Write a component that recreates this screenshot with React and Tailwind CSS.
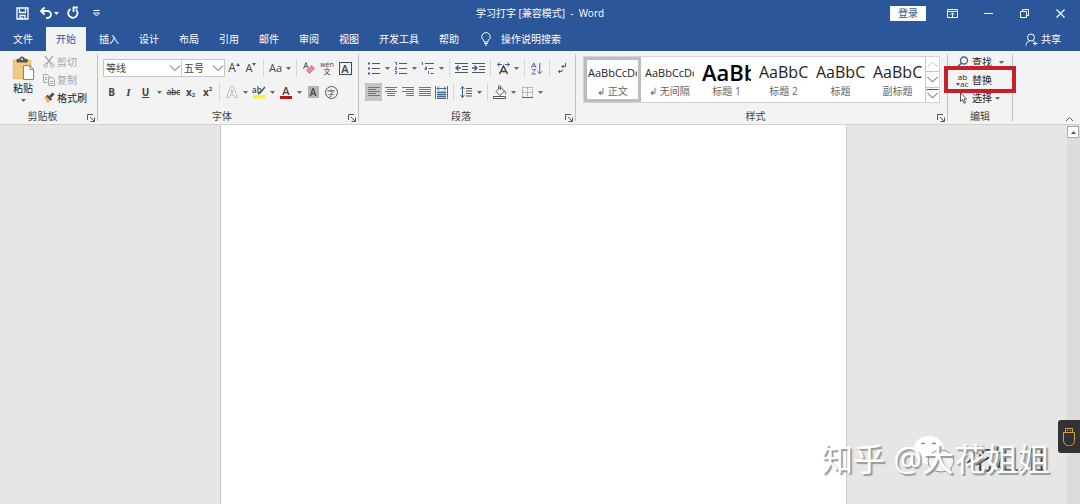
import { useState } from 'react';

const tabs = ['文件', '开始', '插入', '设计', '布局', '引用', '邮件', '审阅', '视图', '开发工具', '帮助'];

const styles = [
  { name: '↲ 正文', sample: 'AaBbCcDd', size: 'text-[11px]' },
  { name: '↲ 无间隔', sample: 'AaBbCcDd', size: 'text-[11px]' },
  { name: '标题 1', sample: 'AaBbC', size: 'text-[22px] font-semibold text-black' },
  { name: '标题 2', sample: 'AaBbCc', size: 'text-[16px]' },
  { name: '标题', sample: 'AaBbCc', size: 'text-[16px]' },
  { name: '副标题', sample: 'AaBbCc', size: 'text-[16px]' },
];

function Icon({ size = 'w-4 h-4', box = 16, color = 'text-[#555]', children }) {
  return (
    <svg
      className={`${size} ${color} shrink-0 overflow-visible`}
      viewBox={`0 0 ${box} ${box}`}
      fill="none"
      stroke="currentColor"
      strokeWidth="1"
      aria-hidden="true"
    >
      {children}
    </svg>
  );
}

function Tool({ label, width = 'w-[18px]', className = '', children }) {
  return (
    <button
      type="button"
      aria-label={label}
      className={`${width} h-[18px] shrink-0 flex items-center justify-center hover:bg-[#d5d5d5] ${className}`}
    >
      {children}
    </button>
  );
}

function Triangle() {
  return (
    <svg className="w-[5px] h-[3px] shrink-0" viewBox="0 0 5 3" fill="#666" aria-hidden="true">
      <path d="M0 0h5L2.500 3z" />
    </svg>
  );
}

function Caret({ label, width = 'w-[9px]' }) {
  return (
    <Tool label={label} width={width}>
      <Triangle />
    </Tool>
  );
}

function Sep() {
  return (
    <span className="w-[7px] h-[18px] shrink-0 flex justify-center">
      <span className="w-px h-full bg-[#d8d8d8]" />
    </span>
  );
}

function Lines({ rows }) {
  return (
    <Icon color="text-[#777]">
      {rows.map(([x1, x2], i) => (
        <path key={i} d={`M${x1} ${3.5 + i * 2}H${x2}`} />
      ))}
    </Icon>
  );
}

function GroupFooter({ title, launcher = true }) {
  return (
    <div className="mt-auto h-4 flex items-center">
      <span className="flex-1 text-center">{title}</span>
      {launcher && (
        <button type="button" aria-label={`${title}设置`} className="w-3 h-3 flex items-end justify-center">
          <Icon size="w-2 h-2" box={8}>
            <path d="M.5 6V.5H6M3 3l4 4M7.500 3.500v4h-4" />
          </Icon>
        </button>
      )}
    </div>
  );
}

function Group({ className = '', children }) {
  return (
    <section className={`flex shrink-0 ${className}`}>
      <div className="flex flex-1 flex-col min-w-0">{children}</div>
      <span className="w-px my-[3px] bg-[#c2c2c2]" />
    </section>
  );
}

function TitleBar() {
  return (
    <div className="h-[26px] grid grid-cols-[1fr_auto_1fr] items-center text-white">
      <div className="flex items-center pl-4">
        <button type="button" aria-label="保存" className="w-[13px]">
          <Icon size="w-[13px] h-[13px]" box={13} color="text-white">
            <path d="M1 1h11v11H1zM3.500 1v4.500h6V1M4 12V8.500h5V12M6 12v-2" strokeWidth="1.300" />
          </Icon>
        </button>
        <button type="button" aria-label="撤消" className="ml-[10px] flex items-center gap-px">
          <Icon size="w-[14px] h-[14px]" box={14} color="text-white">
            <path d="M5.500 1.500 2 5l3.500 3.500M2.500 5h6a3.500 3.500 0 0 1 0 7H7" strokeWidth="1.800" />
          </Icon>
          <svg className="w-[5px] h-[3px]" viewBox="0 0 5 3" fill="#fff"><path d="M0 0h5L2.500 3z" /></svg>
        </button>
        <button type="button" aria-label="重复" className="ml-[7px]">
          <Icon size="w-[14px] h-[14px]" box={14} color="text-white">
            <path d="M4.500 3A4.700 4.700 0 1 0 10 3.600M7.500 6V1.500H12" strokeWidth="1.800" />
          </Icon>
        </button>
        <button type="button" aria-label="自定义快速访问工具栏" className="ml-3">
          <Icon size="w-[9px] h-[9px]" box={9} color="text-white">
            <path d="M1.500 1.500h6M1.500 4h6l-3 3z" />
          </Icon>
        </button>
      </div>
      <h1 className="text-[10px] whitespace-pre">{'学习打字 [兼容模式]  -  Word'}</h1>
      <div className="flex items-center justify-end pr-[2px]">
        <button type="button" className="w-9 h-[15px] mr-2 bg-white text-[#2b579a] text-[10px] leading-[15px]">
          登录
        </button>
        <button type="button" aria-label="功能区显示选项" className="w-9 flex justify-center">
          <Icon size="w-[11px] h-[11px]" box={11} color="text-white">
            <path d="M.5 1.500h10v8H.5zM.5 3.500h10M5.500 9V5M3.500 6.800l2-2 2 2" />
          </Icon>
        </button>
        <button type="button" aria-label="最小化" className="w-9 flex justify-center">
          <Icon size="w-[9px] h-[9px]" box={9} color="text-white">
            <path d="M0 4.500h9" />
          </Icon>
        </button>
        <button type="button" aria-label="还原" className="w-9 flex justify-center">
          <Icon size="w-[9px] h-[9px]" box={9} color="text-white">
            <path d="M.5 2.500h6v6h-6zM2.500 2.500v-2h6v6h-2" />
          </Icon>
        </button>
        <button type="button" aria-label="关闭" className="w-9 flex justify-center">
          <Icon size="w-[9px] h-[9px]" box={9} color="text-white">
            <path d="M.5.5l8 8M8.500.5l-8 8" strokeWidth="1.200" />
          </Icon>
        </button>
      </div>
    </div>
  );
}

function TabBar({ active, onSelect }) {
  return (
    <nav className="h-[25px] flex items-end pl-[3px] text-white text-[10px]">
      {tabs.map((tab, i) => (
        <button
          key={tab}
          type="button"
          onClick={() => onSelect(tab)}
          className={`h-6 px-[10px] whitespace-nowrap ${i < 2 ? 'mr-[3px]' : ''} ${
            active === tab ? 'bg-[#f3f3f3] text-[#2b579a]' : ''
          }`}
        >
          {tab}
        </button>
      ))}
      <button type="button" className="h-6 ml-3 flex items-center gap-[10px] whitespace-nowrap">
        <svg className="w-[10px] h-[14px]" viewBox="0 0 10 14" fill="none" stroke="#fff" aria-hidden="true">
          <path d="M3 10V8.500C1.500 7.500.8 6.300.8 4.800a4.200 4.200 0 0 1 8.400 0C9.200 6.300 8.500 7.500 7 8.500V10zM3.200 11.500h3.600M4 13h2" />
        </svg>
        操作说明搜索
      </button>
      <button type="button" className="h-6 ml-auto mr-[19px] flex items-center gap-[3px]">
        <Icon size="w-[13px] h-[13px]" box={13} color="text-white">
          <circle cx="6" cy="4.500" r="3.500" />
          <path d="M1 12.500c.3-3 1.800-4.500 4-4.700M8 8l1 1M10 8.500v4M8 10.500h4.500" />
        </Icon>
        共享
      </button>
    </nav>
  );
}

function ClipboardGroup() {
  return (
    <Group className="w-[98px]">
      <div className="flex pt-[2px] pl-[11px]">
        <button type="button" className="w-6 pt-[2px] flex flex-col items-center text-[#222] whitespace-nowrap">
          <Icon size="w-6 h-[26px]" box={26}>
            <path d="M2.500 4.500h19v20h-19z" fill="#f0c983" stroke="#e8b85c" />
            <path d="M6.500 6.500v-3h3a2.500 2.500 0 0 1 5 0h3v3z" fill="#555" stroke="#555" />
            <circle cx="12" cy="3.500" r="1" fill="#fff" stroke="none" />
            <path d="M13.500 10.500h7l4 4v11h-11z" fill="#fff" stroke="#777" />
            <path d="M20.500 10.500v4h4" stroke="#777" />
          </Icon>
          <span className="leading-[14px]">粘贴</span>
          <span className="pt-1"><Triangle /></span>
        </button>
        <div className="ml-2 flex flex-col">
          <button type="button" className="h-[18px] flex items-center gap-[2px] text-[#a6a6a6]">
            <Icon size="w-3 h-3" box={12} color="text-[#a6a6a6]">
              <path d="M2 0l6.500 8M10 0L3.500 8" strokeWidth="1.300" />
              <circle cx="2.500" cy="9.500" r="1.700" />
              <circle cx="9.500" cy="9.500" r="1.700" />
            </Icon>
            剪切
          </button>
          <button type="button" className="h-[18px] flex items-center gap-[2px] text-[#a6a6a6]">
            <Icon size="w-3 h-3" box={12} color="text-[#a6a6a6]">
              <path d="M4.500 8.500h-4v-8h4l2 2M2 3.500h2M2 5.500h2M5.500 3.500h4l2 2v6h-6zM7 7.500h3M7 9.500h3" />
            </Icon>
            复制
          </button>
          <button type="button" className="h-[18px] flex items-center gap-[2px] text-[#222]">
            <Icon size="w-3 h-3" box={12}>
              <path d="M1 5l3-2 4 4-2 3-1 1.500z" fill="#e9b35f" stroke="none" />
              <path d="M4 3.500L8.500 8" stroke="#444" strokeWidth="2" />
              <path d="M7 5l3.500-3.500" stroke="#444" strokeWidth="2.500" />
            </Icon>
            格式刷
          </button>
        </div>
      </div>
      <GroupFooter title="剪贴板" />
    </Group>
  );
}

function FontSelect({ label, value, options, width }) {
  return (
    <label className={`${width} h-[18px] flex items-center bg-white border border-[#c6c6c6] -mr-px`}>
      <span className="sr-only">{label}</span>
      <select defaultValue={value} className="min-w-0 h-4 flex-1 appearance-none pl-[2px] bg-transparent text-[10px] leading-[15px]">
        {options.map((o) => <option key={o}>{o}</option>)}
      </select>
      <Icon size="w-3 h-3" box={12}>
        <path d="M1 3.500l5 5 5-5" />
      </Icon>
    </label>
  );
}

function FontGroup() {
  return (
    <Group className="w-[261px]">
      <div className="flex pt-2 pl-[5px]">
        <div className="flex w-[121px]">
          <FontSelect label="字体" value="等线" options={['等线', '宋体', '黑体']} width="w-[79px]" />
          <FontSelect label="字号" value="五号" options={['四号', '小四', '五号']} width="w-[44px]" />
        </div>
        <Tool label="增大字号" width="w-[17px]" className="ml-[2px]">
          <span className="text-[12px] font-medium">A</span>
          <svg className="w-[5px] h-[10px]" viewBox="0 0 5 10" fill="#3b5f94"><path d="M0 3h4L2 0z" /></svg>
        </Tool>
        <Tool label="减小字号" width="w-[17px]">
          <span className="text-[11px] font-medium">A</span>
          <svg className="w-[5px] h-[10px]" viewBox="0 0 5 10" fill="#3b5f94"><path d="M0 0h4L2 3z" /></svg>
        </Tool>
        <Sep />
        <Tool label="更改大小写" width="w-[26px]" className="gap-1">
          <span className="text-[11px] font-medium">Aa</span>
          <Triangle />
        </Tool>
        <Sep />
        <Tool label="清除所有格式">
          <Icon size="w-3 h-3" box={12}>
            <path d="M.5 7L3 .5 5.500 7M1.500 4.500h3" />
            <path d="M3.500 8.500l5-5 3 3-5 5z" fill="#e58a9c" stroke="#d8788c" />
          </Icon>
        </Tool>
        <Tool label="拼音指南">
          <span className="flex flex-col items-center text-[7px] leading-[7px]">
            <span>wén</span>
            <span>文</span>
          </span>
        </Tool>
        <Tool label="字符边框">
          <span className="w-[13px] h-[13px] flex items-center justify-center border border-[#3c4a63] text-[11px] leading-none font-semibold">A</span>
        </Tool>
      </div>
      <div className="flex pt-[6px] pl-[5px]">
        <Tool label="加粗" width="w-[17px]"><b>B</b></Tool>
        <Tool label="倾斜" width="w-[17px]"><i className="font-['Liberation_Serif',serif] font-bold text-[11px]">I</i></Tool>
        <Tool label="下划线" width="w-[17px]"><u className="font-bold">U</u></Tool>
        <Caret label="下划线样式" width="w-[11px]" />
        <Tool label="删除线" width="w-[17px]"><s className="font-semibold text-[8px]">abc</s></Tool>
        <Tool label="下标" width="w-[17px]"><b>x</b><b className="pt-[6px] text-[6px]">2</b></Tool>
        <Tool label="上标" width="w-[17px]"><b>x</b><b className="pb-[6px] text-[6px]">2</b></Tool>
        <Sep />
        <Tool label="文本效果">
          <svg className="w-3 h-3" viewBox="0 0 12 12" fill="#fff" stroke="#aaa" aria-hidden="true">
            <path d="M.6 11.500L4.600.6h2.800l4 10.900H8.800L8 9H4l-.8 2.500zM4.800 7h2.400L6 3.200z" strokeWidth=".8" />
          </svg>
        </Tool>
        <Caret label="更多文本效果" />
        <Tool label="突出显示">
          <Icon size="w-[14px] h-[14px]" box={14}>
            <path d="M1 10h12v3.500H1z" fill="#f8f03c" stroke="none" />
            <path d="M13 2L8 8l-2 1" stroke="#555" strokeWidth="1.500" />
            <text x="0" y="8" fontSize="8" fontWeight="600" fill="#444" stroke="none">ab</text>
          </Icon>
        </Tool>
        <Caret label="突出显示颜色" />
        <Tool label="字体颜色">
          <span className="w-3 h-[14px] border-b-[3px] border-[#c00f1c] text-center text-[11px] leading-[11px] font-semibold">A</span>
        </Tool>
        <Caret label="更多字体颜色" />
        <Tool label="字符底纹">
          <span className="w-[11px] h-3 bg-[#b4b4b4] text-center text-[10px] leading-3 font-semibold">A</span>
        </Tool>
        <Tool label="带圈字符">
          <span className="w-[13px] h-[13px] rounded-full border border-[#555] text-center text-[8px] leading-[11px]">字</span>
        </Tool>
      </div>
      <GroupFooter title="字体" />
    </Group>
  );
}

function ParagraphGroup() {
  return (
    <Group className="w-[217px]">
      <div className="flex pt-2 pl-[6px]">
        <Tool label="项目符号">
          <Icon size="w-3 h-3" box={12}>
            <path d="M0 1.500h2M0 6.500h2M0 11.500h2" stroke="#3b5f94" strokeWidth="2" />
            <path d="M4 1.500h8M4 6.500h8M4 11.500h8" />
          </Icon>
        </Tool>
        <Caret label="更多项目符号" />
        <Tool label="编号">
          <Icon size="w-3 h-3" box={12}>
            <path d="M0 .5h1.500V3M0 5h1.500v1L0 7.500h2M0 9.500h1.500v2H0" stroke="#3b5f94" />
            <path d="M4 1.500h8M4 6.500h8M4 11.500h8" />
          </Icon>
        </Tool>
        <Caret label="更多编号" />
        <Tool label="多级列表">
          <Icon size="w-3 h-3" box={12}>
            <path d="M-.5 .5h1V3M3 5h1.500v2.500H3V6M6.500 9v2.500" stroke="#3b5f94" />
            <path d="M3 1.500h9M6.500 6.500h5M8.500 11.500h3" />
          </Icon>
        </Tool>
        <Caret label="更多多级列表" />
        <Sep />
        <Tool label="减少缩进量" width="w-[17px]">
          <Icon size="w-[13px] h-[13px]" box={13}>
            <path d="M0 1.500h13M7 4.500h6M7 7.500h6M0 10.500h13" />
            <path d="M6 6H1M3.500 3.500L1 6l2.500 2.500" stroke="#3b5f94" strokeWidth="1.300" />
          </Icon>
        </Tool>
        <Tool label="增加缩进量" width="w-[17px]">
          <Icon size="w-[13px] h-[13px]" box={13}>
            <path d="M0 1.500h13M7 4.500h6M7 7.500h6M0 10.500h13" />
            <path d="M0 6h5M2.500 3.500L5 6 2.500 8.500" stroke="#3b5f94" strokeWidth="1.300" />
          </Icon>
        </Tool>
        <Sep />
        <Tool label="中文版式">
          <Icon size="w-[13px] h-[13px]" box={13}>
            <path d="M2.500 12l4-8 4 8M4 9.500h5" stroke="#444" strokeWidth="1.500" />
            <path d="M5 2.500H.5M2.500.5l-2 2 2 2M8 2.500h4.500M10.500.5l2 2-2 2" stroke="#3b5f94" />
          </Icon>
        </Tool>
        <Caret label="更多中文版式" />
        <Sep />
        <Tool label="排序">
          <Icon size="w-3 h-[13px]" box={13}>
            <path d="M.5 5.500L3 .5l2.500 5M1.500 4h3" stroke="#3b5f94" />
            <path d="M1 7.500h4l-4 5h4.500" stroke="#7d5a94" />
            <path d="M9.500.5V12M7 9.500l2.500 2.500L12 9.500" />
          </Icon>
        </Tool>
        <Sep />
        <Tool label="显示编辑标记">
          <Icon size="w-3 h-3" box={12}>
            <path d="M9.500 1v3.500H6M7.500 3L6 4.500 7.500 6" />
            <path d="M6 7.500v2H2.500M4 8l-1.500 1.500L4 11" stroke="#3b5f94" />
          </Icon>
        </Tool>
      </div>
      <div className="flex pt-[6px] pl-[6px]">
        <Tool label="左对齐" width="w-[17px]" className="bg-[#c5c5c5]">
          <Lines rows={[[2, 14], [2, 10], [2, 14], [2, 10], [2, 14]]} />
        </Tool>
        <Tool label="居中" width="w-[17px]"><Lines rows={[[2, 14], [4, 12], [2, 14], [4, 12], [4, 12]]} /></Tool>
        <Tool label="右对齐" width="w-[17px]"><Lines rows={[[2, 14], [6, 14], [2, 14], [6, 14], [6, 14]]} /></Tool>
        <Tool label="两端对齐" width="w-[17px]"><Lines rows={[[2, 14], [2, 14], [2, 14], [2, 14], [2, 14]]} /></Tool>
        <Tool label="分散对齐" width="w-[17px]">
          <Icon size="w-[13px] h-[13px]" box={13} color="text-[#4d6b97]">
            <path d="M2 5h9v8H2z" fill="#a9b8cf" stroke="none" />
            <path d="M.5 0v13M12.500 0v13M2 2.500h9M4 .5l-2 2 2 2M9 .5l2 2-2 2" />
            <path d="M2 6.500h9M2 8.500h9M2 10.500h9M2 12.500h9" />
          </Icon>
        </Tool>
        <Sep />
        <Tool label="行和段落间距">
          <Icon size="w-3 h-3" box={12}>
            <path d="M2.500.5v11M.5 3l2-2.500 2 2.500M.5 9l2 2.500 2-2.500" stroke="#3b5f94" />
            <path d="M6 2.500h6M6 5h6M6 7.500h6M6 10h6" />
          </Icon>
        </Tool>
        <Caret label="更多间距" />
        <Sep />
        <Tool label="底纹">
          <Icon size="w-[14px] h-[14px]" box={14}>
            <path d="M3 6.500l4.500-4.500 4 4-4.500 4.500zM5.500 4V1.500a1 1 0 0 1 2 0V5M11.500 6c1 1 1.500 2 1 3.500" />
            <path d="M.5 11.500h12v2H.5z" fill="#fff" />
          </Icon>
        </Tool>
        <Caret label="更多底纹" />
        <Tool label="边框">
          <Icon size="w-[11px] h-[11px]" box={11} color="text-[#999]">
            <path d="M.5.5h10v10H.5zM5.500.5v10M.5 5.500h10" strokeDasharray="1.500 .8" />
            <path d="M0 10.500h11" stroke="#666" />
          </Icon>
        </Tool>
        <Caret label="更多边框" />
      </div>
      <GroupFooter title="段落" />
    </Group>
  );
}

function StylesGroup() {
  return (
    <Group className="w-[372px]">
      <div className="pt-[5px] pl-[7px] pr-[7px]">
        <div className="h-[47px] flex bg-white border border-[#d4d4d4]">
          <div className="flex flex-1 min-w-0">
            {styles.map((style) => (
              <button
                key={style.name}
                type="button"
                className={`w-[57px] h-[45px] shrink-0 flex flex-col border-[3px] px-px ${
                  style.name === '↲ 正文' ? 'border-[#bdbdbd]' : 'border-transparent'
                }`}
              >
                <span
                  className={`w-full h-[25px] overflow-hidden text-left whitespace-nowrap leading-[25px] text-[#222] font-['Open_Sans',sans-serif] ${style.size}`}
                >
                  {style.sample}
                </span>
                <span className="w-full text-center leading-3 whitespace-nowrap text-[#666]">{style.name}</span>
              </button>
            ))}
          </div>
          <div className="w-[14px] flex flex-col border-l border-[#c6c6c6] divide-y divide-[#c6c6c6]">
            <button type="button" aria-label="上一行" className="flex-1 flex items-center justify-center">
              <Icon size="w-[11px] h-[11px]" box={11} color="text-[#c0c0c0]"><path d="M.5 8l5-5 5 5" /></Icon>
            </button>
            <button type="button" aria-label="下一行" className="flex-1 flex items-center justify-center">
              <Icon size="w-[11px] h-[11px]" box={11}><path d="M.5 3l5 5 5-5" /></Icon>
            </button>
            <button type="button" aria-label="其他样式" className="flex-1 flex items-center justify-center">
              <Icon size="w-[11px] h-[11px]" box={11}><path d="M-.5 .5h12M.5 4l5 5 5-5" /></Icon>
            </button>
          </div>
        </div>
      </div>
      <GroupFooter title="样式" />
    </Group>
  );
}

function EditingGroup() {
  return (
    <Group className="w-[65px] relative">
      <div className="flex flex-col pt-[2px] pl-2 text-[#222]">
        <button type="button" className="h-[18px] flex items-center gap-[3px]">
          <Icon size="w-[13px] h-3" box={12}>
            <circle cx="7.500" cy="4.500" r="3.500" stroke="#3b5f94" strokeWidth="1.300" />
            <path d="M5 7L.5 11.500" stroke="#3b5f94" strokeWidth="1.600" />
          </Icon>
          查找
          <span className="pl-1"><Triangle /></span>
        </button>
        <button type="button" className="h-[18px] flex items-center gap-[3px]">
          <span className="w-[13px] flex flex-col text-[8px] leading-[7px]">
            <span>ab</span>
            <span className="flex items-center text-[#333]">
              <svg className="w-1 h-1" viewBox="0 0 4 4" fill="#3b5f94"><path d="M0 1h4L2 4z" /></svg>
              ac
            </span>
          </span>
          替换
        </button>
        <button type="button" className="h-[18px] flex items-center gap-[3px]">
          <Icon size="w-[13px] h-3" box={12}>
            <path d="M4 .8v8.700l2-2 1.500 3.800 1.500-.7-1.600-3.600H10z" fill="#fff" />
          </Icon>
          选择
          <Triangle />
        </button>
      </div>
      <GroupFooter title="编辑" launcher={false} />
      <span className="absolute -left-1 -right-[3px] top-[15px] h-[27px] border-4 border-[#c8202b] pointer-events-none" />
    </Group>
  );
}

function Ribbon() {
  return (
    <div className="h-[74px] flex bg-[#f3f3f3] border-b border-[#d2d2d2] text-[10px] text-[#444]">
      <ClipboardGroup />
      <FontGroup />
      <ParagraphGroup />
      <StylesGroup />
      <EditingGroup />
      <button type="button" aria-label="折叠功能区" className="ml-auto mr-[6px] flex items-end">
        <Icon size="w-[9px] h-[9px]" box={9}><path d="M1 6l3.500-3.500L8 6" /></Icon>
      </button>
    </div>
  );
}

function Watermark() {
  return (
    <div className="absolute right-[30px] bottom-[21px] h-12 flex items-center whitespace-nowrap pointer-events-none">
      <svg className="absolute left-[90px] top-0 w-12 h-11" viewBox="0 0 48 44" aria-hidden="true">
        <path d="M18 1C9 1 3 7 3 15c0 5 2 8 6 11l-2 5 6-3c2 .6 5 1 7 .6C33 28 33 18 33 15 33 7 27 1 18 1z" fill="#fff" />
        <ellipse cx="30" cy="26" rx="13" ry="11" fill="#f1f1f1" stroke="#777" strokeWidth=".8" />
        <path d="M10 9q2-2 4 0M21 9q2-2 4 0" fill="none" stroke="#555" />
        <path d="M36 35l5 4-1-6" fill="#f1f1f1" stroke="#777" strokeWidth=".8" />
      </svg>
      <span className="absolute right-1 text-[27px] leading-none text-[#444]">花姐姐</span>
      <span className="relative text-[32px] leading-none text-white [text-shadow:2px_2px_1px_#999]">
        知乎 @大花姐姐
      </span>
    </div>
  );
}

function Workspace() {
  return (
    <main className="relative flex-1 flex bg-[#e6e6e6]">
      <div className="flex-1 flex justify-center">
        <div className="w-[58.700%] bg-white border-x border-[#c9c9c9]" />
      </div>
      <div className="w-[13px] pt-px bg-[#dcdcdc]">
        <button type="button" aria-label="向上滚动" className="w-3 h-3 flex items-center justify-center bg-white border border-[#ababab]">
          <svg className="w-[5px] h-[3px]" viewBox="0 0 5 3" fill="#555"><path d="M0 3h5L2.500 0z" /></svg>
        </button>
      </div>
      <Watermark />
      <button
        type="button"
        aria-label="U 盘助手"
        className="absolute right-0 bottom-[51px] w-[22px] h-[33px] rounded-l-[3px] bg-[#333] flex items-center justify-center"
      >
        <svg className="w-3 h-[18px]" viewBox="0 0 12 18" fill="none" stroke="#cda34f" aria-hidden="true">
          <path d="M2.500 4V.5h7V4M.5 4.500h11v8a5 5 0 0 1-11 0zM4.500 2v1M7.500 2v1" />
        </svg>
      </button>
    </main>
  );
}

export default function App() {
  const [active, setActive] = useState('开始');

  return (
    <div className="min-h-screen flex flex-col overflow-hidden font-['Open_Sans','Noto_Sans_CJK_SC',sans-serif]">
      <header className="bg-[#2b579a]">
        <TitleBar />
        <TabBar active={active} onSelect={setActive} />
      </header>
      <Ribbon />
      <Workspace />
    </div>
  );
}
